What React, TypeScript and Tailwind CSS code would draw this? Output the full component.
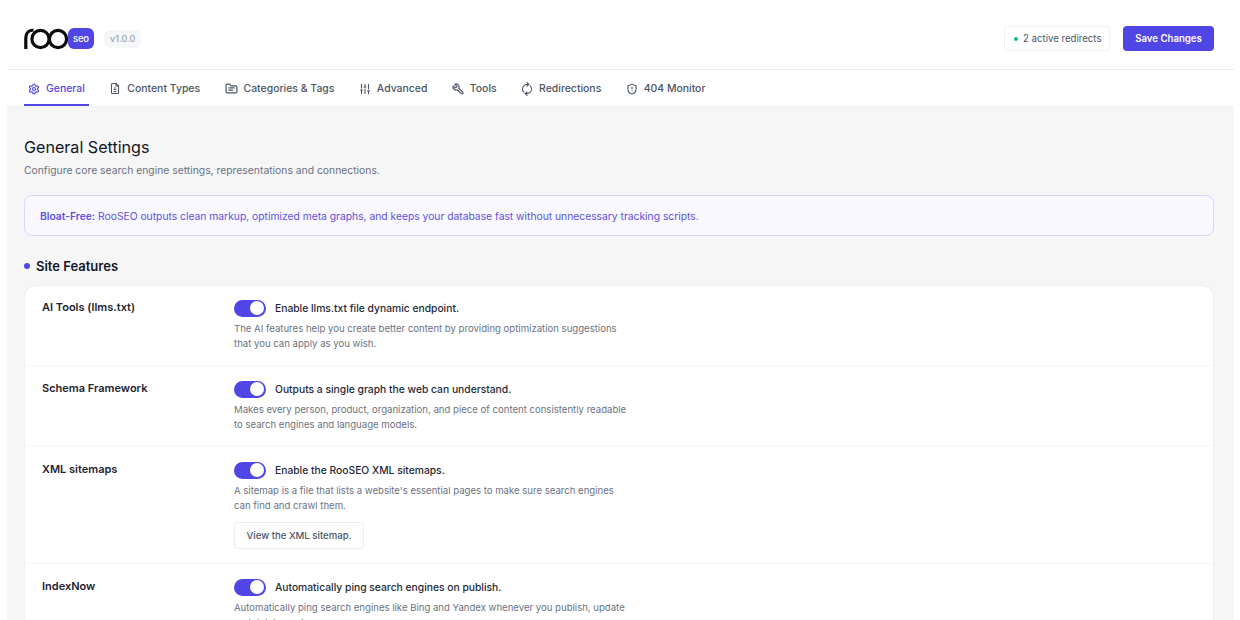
import { Settings, Wrench, RefreshCw, ShieldAlert, SlidersVertical } from "lucide-react";
import type { ReactNode } from "react";

function FileIcon() {
  return (
    <svg width="12" height="13" viewBox="0 0 24 24" fill="none" stroke="currentColor" strokeWidth="2.2" strokeLinecap="round" strokeLinejoin="round" className="shrink-0">
      <path d="M14 2H7a2 2 0 0 0-2 2v16a2 2 0 0 0 2 2h10a2 2 0 0 0 2-2V7z" />
      <path d="M14 2v5h5" />
      <path d="M12 10v2M10 14h4M10 18h4" />
    </svg>
  );
}

function FolderIcon() {
  return (
    <svg width="13" height="13" viewBox="0 0 24 24" fill="none" stroke="currentColor" strokeWidth="2.2" strokeLinecap="round" strokeLinejoin="round" className="shrink-0">
      <path d="M2 6a2 2 0 0 1 2-2h5l2 3h9a2 2 0 0 1 2 2v9a2 2 0 0 1-2 2H4a2 2 0 0 1-2-2z" />
      <path d="M7 11h10M7 15h7" />
    </svg>
  );
}

const iconClass = "shrink-0";
const tabs: { label: string; icon: ReactNode; active?: boolean }[] = [
  { label: "General", icon: <Settings size={12} strokeWidth={2.4} className={iconClass} />, active: true },
  { label: "Content Types", icon: <FileIcon /> },
  { label: "Categories & Tags", icon: <FolderIcon /> },
  { label: "Advanced", icon: <SlidersVertical size={12} strokeWidth={2.2} className={iconClass} /> },
  { label: "Tools", icon: <Wrench size={12} strokeWidth={2.4} className="shrink-0 -scale-x-100" /> },
  { label: "Redirections", icon: <RefreshCw size={12} strokeWidth={2.2} className="shrink-0 -rotate-45" /> },
  { label: "404 Monitor", icon: <ShieldAlert size={12} strokeWidth={2.2} className={iconClass} /> },
];

function Logo() {
  return (
    <div className="flex items-center">
      <svg width="45" height="22" viewBox="0 0 45 22" fill="none" stroke="#0b0b0f" strokeWidth="3.2">
        <path d="M1.8 21V10C1.8 5 5 2 9.5 2" />
        <circle cx="16.5" cy="11" r="8.6" />
        <circle cx="34" cy="11" r="8.6" />
      </svg>
      <div className="-ml-[1px] flex h-[21px] w-[26px] items-center justify-center rounded-[6px] bg-[#4f46e5] text-[9.5px] font-medium leading-none tracking-[-0.2px] text-white">
        seo
      </div>
    </div>
  );
}

function Toggle() {
  return (
    <div className="flex h-[17px] w-[32px] shrink-0 items-center justify-end rounded-full bg-[#4f46e5] pr-[2px]">
      <div className="h-[14px] w-[14px] rounded-full bg-white" />
    </div>
  );
}

function Row(props: { label: string; title: string; lines: string[]; h: string; pt: string; children?: ReactNode; last?: boolean }) {
  return (
    <div className={`flex px-[17px] ${props.pt} ${props.h} ${props.last ? "" : "border-b border-[#f6f6f8]"}`}>
      <div className="-mt-[1px] w-[192px] shrink-0 text-[11px] font-semibold leading-[18px] text-[#1f2430]">{props.label}</div>
      <div>
        <div className="flex h-[18px] items-center gap-[9px]">
          <Toggle />
          <div className="text-[10.3px] font-medium leading-[18px] text-[#1f2937]">{props.title}</div>
        </div>
        <div className="mt-[4px] text-[9.58px] leading-[15px] text-[#6b7280]">
          {props.lines.map((l) => (
            <div key={l}>{l}</div>
          ))}
        </div>
        {props.children}
      </div>
    </div>
  );
}

export default function App() {
  return (
    <div className="h-[620px] overflow-hidden bg-white pl-[7px] pr-[6px] font-['Inter',sans-serif]">
      <header className="flex h-[70px] items-center justify-between border-b border-[#eceef1] pl-[17px] pr-[20px] pt-[8px]">
        <div className="flex items-center gap-[10px]">
          <Logo />
          <div className="rounded-[6px] bg-[#f5f6f8] px-[6px] py-[3px] text-[9px] font-medium leading-[12px] text-[#9ca3af]">v1.0.0</div>
        </div>
        <div className="flex items-center gap-[13px]">
          <div className="flex h-[25px] w-[106px] items-center gap-[5px] rounded-[4px] border border-[#eef0f3] bg-white pl-[9px] pt-[1px] text-[9.65px] text-[#4b5563]">
            <span className="h-[4px] w-[4px] rounded-full bg-[#10b981]" />
            2 active redirects
          </div>
          <div className="flex h-[25px] w-[91px] items-center justify-center rounded-[4px] bg-[#4f46e5] pt-[1px] text-[9.65px] font-semibold text-white">Save Changes</div>
        </div>
      </header>
      <nav className="flex h-[37px] gap-[16.4px] border-b border-[#f0f1f3] pl-[17px]">
        {tabs.map(({ label, icon, active }) => (
          <div
            key={label}
            className={`flex items-center gap-[6px] px-[4px] pt-[3px] text-[10.45px] font-medium ${active ? "border-b-2 border-[#4f46e5] text-[#4f46e5]" : "border-b-2 border-transparent text-[#4b5563]"}`}
          >
            {icon}
            {label}
          </div>
        ))}
      </nav>
      <main className="h-[520px] bg-[#f6f6f7] pl-[17px] pr-[20px] pt-[29px]">
        <h1 className="text-[16.1px] font-normal leading-[22px] text-[#111827]">General Settings</h1>
        <p className="mt-[4px] text-[10.35px] leading-[16px] text-[#6b7280]">Configure core search engine settings, representations and connections.</p>
        <div className="mt-[17px] flex h-[41px] items-center rounded-[8px] border border-[#d9d6fb] bg-[#f9f8ff] px-[15px] pt-[2px] text-[10.3px] text-[#5b52dd]">
          <span className="font-semibold">Bloat-Free:</span>&nbsp;RooSEO outputs clean markup, optimized meta graphs, and keeps your database fast without unnecessary tracking scripts.
        </div>
        <div className="mt-[21px] flex items-center gap-[6px]">
          <span className="h-[6px] w-[6px] rounded-full bg-[#4f46e5]" />
          <h2 className="text-[13px] font-semibold leading-[18px] text-[#111827]">Site Features</h2>
        </div>
        <div className="mt-[10px] rounded-t-[12px] border border-[#f0f0f2] bg-white">
          <Row
            h="h-[80px]"
            pt="pt-[13px]"
            label="AI Tools (llms.txt)"
            title="Enable llms.txt file dynamic endpoint."
            lines={["The AI features help you create better content by providing optimization suggestions", "that you can apply as you wish."]}
          />
          <Row
            h="h-[80px]"
            pt="pt-[14px]"
            label="Schema Framework"
            title="Outputs a single graph the web can understand."
            lines={["Makes every person, product, organization, and piece of content consistently readable", "to search engines and language models."]}
          />
          <Row
            h="h-[118px]"
            pt="pt-[15px]"
            label="XML sitemaps"
            title="Enable the RooSEO XML sitemaps."
            lines={["A sitemap is a file that lists a website's essential pages to make sure search engines", "can find and crawl them."]}
          >
            <div className="mt-[9px] flex h-[27px] w-[130px] items-center justify-center rounded-[4px] border border-[#eceef1] bg-white pt-[1px] text-[9.6px] font-medium text-[#4b5563]">View the XML sitemap.</div>
          </Row>
          <Row
            h="h-[90px]"
            pt="pt-[14px]"
            last
            label="IndexNow"
            title="Automatically ping search engines on publish."
            lines={["Automatically ping search engines like Bing and Yandex whenever you publish, update", "and delete posts."]}
          />
        </div>
      </main>
    </div>
  );
}
